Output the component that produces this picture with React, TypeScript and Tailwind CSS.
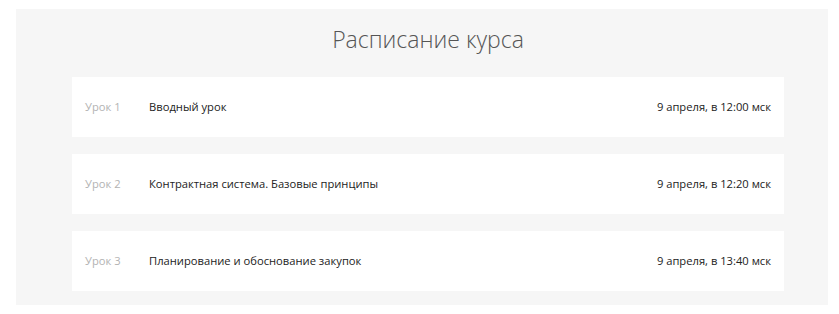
import React from 'react';

const lessons = [
  { n: 1, title: 'Вводный урок', date: '9 апреля, в 12:00 мск' },
  { n: 2, title: 'Контрактная система. Базовые принципы', date: '9 апреля, в 12:20 мск' },
  { n: 3, title: 'Планирование и обоснование закупок', date: '9 апреля, в 13:40 мск' },
];

export default function App() {
  return (
    <div className="bg-white min-h-[314px] pt-[9px] font-['Open_Sans',sans-serif]">
      <section className="ml-4 w-[812px] bg-[#f6f6f6] pl-[56px] pr-[44px] pt-[14px] pb-[14px]">
        <h2 className="text-center text-[23px] leading-[32px] font-light text-[#555]">
          Расписание курса
        </h2>
        <div className="mt-[22px] flex flex-col gap-[17px]">
          {lessons.map(l => (
            <div key={l.n} className="h-[60px] bg-white flex items-center pl-[13px] pr-[13px] text-[11.2px]">
              <span className="w-[64px] text-[#b3b3b3]">Урок {l.n}</span>
              <span className="flex-1 text-[#222]">{l.title}</span>
              <span className="text-[#222]">{l.date}</span>
            </div>
          ))}
        </div>
      </section>
    </div>
  );
}
